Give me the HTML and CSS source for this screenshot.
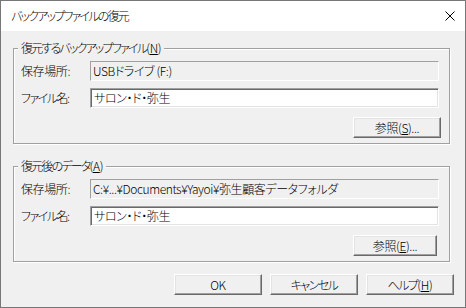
FILE: index.html
```html
<!DOCTYPE html>
<html lang="ja">
<head>
<meta charset="utf-8">
<link rel="stylesheet" href="styles.css">
</head>
<body>
<div class="window">
  <div class="titlebar">
    <span class="title">バックアップファイルの復元</span>
    <span class="close">
      <svg width="10" height="10" viewBox="0 0 10 10"><path d="M0.5 0.5L9.5 9.5M9.5 0.5L0.5 9.5" stroke="#000" stroke-width="1" fill="none"/></svg>
    </span>
  </div>
  <div class="client">
    <section class="group">
      <span class="legend">復元するバックアップファイル<span class="mn">(<u>N</u>)</span></span>
      <div class="row">
        <span class="label">保存場所:</span>
        <div class="field ro">USBドライブ (F:)</div>
      </div>
      <div class="row row-input">
        <span class="label kana">ファイル名:</span>
        <div class="field input">サロン・ド・弥生</div>
      </div>
      <div class="btnrow">
        <button class="btn browse">参照(<u>S</u>)...</button>
      </div>
    </section>
    <section class="group group2">
      <span class="legend">復元後のデータ<span class="mn">(<u>A</u>)</span></span>
      <div class="row">
        <span class="label">保存場所:</span>
        <div class="field ro">C:¥...¥Documents¥Yayoi¥弥生顧客データフォルダ</div>
      </div>
      <div class="row row-input">
        <span class="label kana">ファイル名:</span>
        <div class="field input">サロン・ド・弥生</div>
      </div>
      <div class="btnrow">
        <button class="btn browse browse2">参照(<u>E</u>)...</button>
      </div>
    </section>
    <div class="footer">
      <button class="btn">OK</button>
      <button class="btn kana">キャンセル</button>
      <button class="btn kana">ヘルプ<span class="mn">(<u>H</u>)</span></button>
    </div>
  </div>
</div>
</body>
</html>
```

FILE: styles.css
```css
* { box-sizing: border-box; }
html, body { margin: 0; padding: 0; background: #fff; }
body {
  font-family: "Noto Sans CJK JP", "Noto Sans", sans-serif;
  font-size: 12px;
  font-weight: 300;
  line-height: 14px;
  letter-spacing: -0.4px;
  color: #000;
  font-feature-settings: "palt";
}
.title, .legend { letter-spacing: -1.8px; }
.kana { letter-spacing: -1.5px; }
.mn { letter-spacing: -0.3px; }
u { text-decoration: underline; text-underline-offset: 1px; }
.window {
  width: 466px;
  height: 308px;
  border: 1px solid #777;
  display: flex;
  flex-direction: column;
  background: #f0f0f0;
}
.titlebar {
  height: 30px;
  background: #fff;
  display: flex;
  align-items: center;
  justify-content: space-between;
  padding: 0 9px 0 10px;
  flex: none;
}
.close { display: flex; width: 10px; height: 10px; margin-right: 1px; }
.client {
  flex: 1;
  padding: 17px 14px 0 12px;
  display: flex;
  flex-direction: column;
}
.group {
  position: relative;
  width: 437px;
  height: 96px;
  border: 1px solid #a0a0a0;
  box-shadow: inset 1px 1px 0 #fff, 1px 1px 0 #fff;
  padding: 12px 8px 0 7px;
  display: flex;
  flex-direction: column;
}
.group2 { margin-top: 22px; }
.legend {
  position: absolute;
  left: 4px;
  top: -8px;
  padding: 0 3px;
  background: #f0f0f0;
  white-space: nowrap;
}
.row {
  display: flex;
  align-items: center;
  height: 20px;
  padding-right: 2px;
}
.row-input { margin-top: 7px; }
.label { width: 69px; flex: none; }
.field {
  flex: 1;
  height: 20px;
  padding: 2px 2px 0 2px;
  white-space: nowrap;
  overflow: hidden;
}
.ro {
  border: 1px solid;
  border-color: #a0a0a0 #fff #fff #a0a0a0;
  background: #f0f0f0;
}
.input {
  border: 1px solid;
  border-color: #a0a0a0 #fff #fff #a0a0a0;
  box-shadow: inset 1px 1px 0 #696969, inset -1px -1px 0 #e3e3e3;
  background: #fff;
  padding-left: 3px;
}
.btnrow {
  display: flex;
  justify-content: flex-end;
  margin-top: 9px;
}
.btn {
  font: inherit;
  letter-spacing: -0.4px;
  font-feature-settings: "palt";
  color: #000;
  height: 21px;
  width: 88px;
  padding: 0;
  background: #f0f0f0;
  border: 1px solid;
  border-color: #fff #696969 #696969 #fff;
  box-shadow: inset -1px -1px 0 #a0a0a0, inset 1px 1px 0 #e3e3e3;
  display: flex;
  align-items: center;
  justify-content: center;
}
.btn.kana { letter-spacing: -1.5px; }
.btn .mn { letter-spacing: -0.3px; }
.browse2 { width: 84px; margin-right: 4px; }
.footer {
  display: flex;
  justify-content: flex-end;
  gap: 8px;
  margin-top: 12px;
  margin-right: -3px;
}
```
